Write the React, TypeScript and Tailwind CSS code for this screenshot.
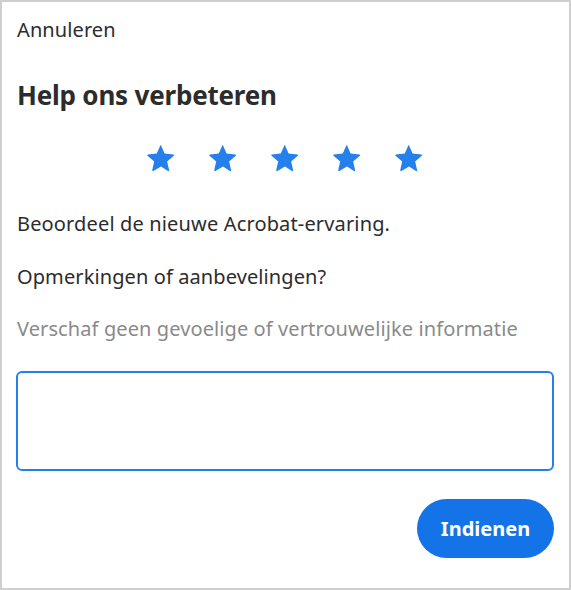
import React, { useState } from 'react';

const Star: React.FC = () => (
  <svg viewBox="0 0 24 24" className="h-[32px] w-[32px]" aria-hidden="true">
    <path
      d="M12 2.6l2.7 6.1 6.6.6c.5.1.7.7.3 1l-5 4.4 1.5 6.5c.1.5-.4.9-.9.6L12 18.4l-5.7 3.4c-.5.3-1-.1-.9-.6l1.5-6.5-5-4.4c-.4-.3-.2-.9.3-1l6.6-.6 2.7-6.1c.2-.5.9-.5 1 0z"
      fill="#2680eb"
    />
  </svg>
);

const App: React.FC = () => {
  const [comment, setComment] = useState('');

  return (
    <div
      className="w-[571px] h-[590px] bg-white border-2 border-[#cfcfcf] text-[#2c2c2c]"
      style={{ fontFamily: '"Noto Sans", "Open Sans", sans-serif' }}
    >
      <div className="w-[566px] pl-[14px] pt-[13px]">
        <div className="w-[538px]">
          <div className="pl-[1px] text-[20px] leading-[30px] tracking-[0.1px]">Annuleren</div>

          <h2 className="mt-[33px] pl-[1px] text-[26px] font-bold leading-[34px] tracking-[-0.2px]">Help ons verbeteren</h2>

          <div className="mt-[30px] flex justify-center gap-[30px]">
            {[1, 2, 3, 4, 5].map((i) => (
              <Star key={i} />
            ))}
          </div>

          <p className="mt-[36px] pl-[1px] text-[20px] leading-[28px] tracking-[0.15px]">Beoordeel de nieuwe Acrobat-ervaring.</p>
          <p className="mt-[25px] pl-[1px] text-[20px] leading-[28px] tracking-[0.1px]">Opmerkingen of aanbevelingen?</p>
          <p className="mt-[24px] pl-[1px] text-[20px] leading-[28px] tracking-[0.1px] text-[#8a8a8a]">
            Verschaf geen gevoelige of vertrouwelijke informatie
          </p>

          <textarea
            value={comment}
            onChange={(e) => setComment(e.target.value)}
            className="mt-[28px] block w-[538px] h-[100px] rounded-[6px] border-[2.5px] border-[#2680eb] resize-none outline-none p-2 text-[18px]"
          />

          <div className="mt-[28px] flex justify-end">
            <button className="h-[59px] w-[137px] rounded-full bg-[#1473e6] text-white text-[20px] font-bold">
              Indienen
            </button>
          </div>
        </div>
      </div>
    </div>
  );
};

export default App;
